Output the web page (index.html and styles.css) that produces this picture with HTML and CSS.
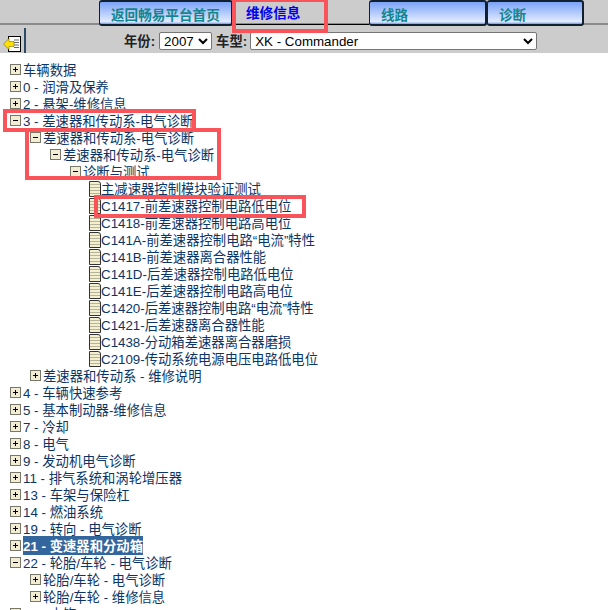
FILE: index.html
```html
<!DOCTYPE html>
<html lang="zh">
<head>
    <meta charset="UTF-8">
    <title>维修信息</title>
    <link rel="stylesheet" href="styles.css">
</head>
<body>
    <!-- Top tabs -->
    <div class="tabs">
        <a class="tab tab-home">返回畅易平台首页</a>
        <a class="tab-active">维修信息</a>
        <a class="tab tab-wiring">线路</a>
        <a class="tab tab-diag">诊断</a>
    </div>

    <!-- Year / model -->
    <div class="toolbar">
        <div class="toggle-box">
            <svg width="18" height="16" viewBox="0 0 18 16">
                <rect x="5.5" y="0.5" width="12" height="15" fill="#fff" stroke="#000"/>
                <path d="M11 4h5M11 6.5h5M11 9h5M11 11.5h5" stroke="#666" fill="none"/>
                <path d="M0.5 8L6 2.5V5.5h5v5H6v3z" fill="#ffe000" stroke="#77700a" stroke-width="0.6"/>
            </svg>
        </div>
        <div class="filters">
            <label>年份:</label>
            <select class="year"><option>2007</option></select>
            <label>车型:</label>
            <select class="model"><option>XK - Commander</option></select>
        </div>
    </div>

    <!-- Tree -->
    <div class="tree">
        <div class="node"><i class="box plus"></i>车辆数据</div>
        <div class="node"><i class="box plus"></i>0 - 润滑及保养</div>
        <div class="node"><i class="box plus"></i>2 - 悬架-维修信息</div>
        <div class="node"><i class="box minus"></i>3 - 差速器和传动系-电气诊断</div>
        <div class="sub">
            <div class="node"><i class="box minus"></i>差速器和传动系-电气诊断</div>
            <div class="sub">
                <div class="node"><i class="box minus"></i>差速器和传动系-电气诊断</div>
                <div class="sub">
                    <div class="node"><i class="box minus"></i>诊断与测试</div>
                    <div class="leaves">
                        <div class="leaf"><i class="doc"></i>主减速器控制模块验证测试</div>
                        <div class="leaf"><i class="doc"></i>C1417-前差速器控制电路低电位</div>
                        <div class="leaf"><i class="doc"></i>C1418-前差速器控制电路高电位</div>
                        <div class="leaf"><i class="doc"></i>C141A-前差速器控制电路“电流”特性</div>
                        <div class="leaf"><i class="doc"></i>C141B-前差速器离合器性能</div>
                        <div class="leaf"><i class="doc"></i>C141D-后差速器控制电路低电位</div>
                        <div class="leaf"><i class="doc"></i>C141E-后差速器控制电路高电位</div>
                        <div class="leaf"><i class="doc"></i>C1420-后差速器控制电路“电流”特性</div>
                        <div class="leaf"><i class="doc"></i>C1421-后差速器离合器性能</div>
                        <div class="leaf"><i class="doc"></i>C1438-分动箱差速器离合器磨损</div>
                        <div class="leaf"><i class="doc"></i>C2109-传动系统电源电压电路低电位</div>
                    </div>
                </div>
            </div>
            <div class="node"><i class="box plus"></i>差速器和传动系 - 维修说明</div>
        </div>
        <div class="node"><i class="box plus"></i>4 - 车辆快速参考</div>
        <div class="node"><i class="box plus"></i>5 - 基本制动器-维修信息</div>
        <div class="node"><i class="box plus"></i>7 - 冷却</div>
        <div class="node"><i class="box plus"></i>8 - 电气</div>
        <div class="node"><i class="box plus"></i>9 - 发动机电气诊断</div>
        <div class="node"><i class="box plus"></i>11 - 排气系统和涡轮增压器</div>
        <div class="node"><i class="box plus"></i>13 - 车架与保险杠</div>
        <div class="node"><i class="box plus"></i>14 - 燃油系统</div>
        <div class="node"><i class="box plus"></i>19 - 转向 - 电气诊断</div>
        <div class="node"><i class="box plus"></i><span class="selected">21 - 变速器和分动箱</span></div>
        <div class="node"><i class="box minus"></i>22 - 轮胎/车轮 - 电气诊断</div>
        <div class="sub">
            <div class="node"><i class="box plus"></i>轮胎/车轮 - 电气诊断</div>
            <div class="node"><i class="box plus"></i>轮胎/车轮 - 维修信息</div>
        </div>
        <div class="node"><i class="box plus"></i>23 - 内饰</div>
    </div>

    <!-- Red annotation boxes drawn over the screenshot -->
    <div class="mark mark-tab"></div>
    <div class="mark mark-row"></div>
    <div class="mark mark-group"></div>
    <div class="mark mark-leaf"></div>
</body>
</html>
```

FILE: styles.css
```css
html, body {
    height: 100%;
    overflow: hidden;
}
body {
    margin: 0;
    font-family: "Liberation Sans", "Noto Sans CJK SC", sans-serif;
    font-size: 13.33px;
    color: #0b3566;
    background: #fff;
    position: relative;
}
.tabs {
    display: flex;
    height: 25px;
    box-sizing: border-box;
    padding-left: 99px;
    padding-right: 24px;
    background: #cccccc;
    border-bottom: 2px solid #8a8a8a;
    font-size: 13.6px;
    font-weight: bold;
}
.tab {
    box-sizing: border-box;
    height: 26px;
    padding: 2px 0 0 11px;
    color: #14858f;
    background: linear-gradient(#7ba3f7, #e2ebff 90%, #6c96f5);
    border: 2px solid #10202f;
    border-left-width: 1px;
    border-radius: 3px;
}
.tab-home {
    width: 134px;
}
.tab-active {
    width: 136px;
    height: 25px;
    box-sizing: border-box;
    padding: 2px 0 0 13px;
    color: #0000f0;
    border-bottom: 1px solid #000;
}
.tab-wiring {
    width: 118px;
}
.tab-diag {
    width: 97px;
}
.toolbar {
    display: flex;
    height: 28px;
    background: #cccccc;
}
.toggle-box {
    width: 26px;
    height: 25px;
    margin-top: 3px;
    box-sizing: border-box;
    padding: 8px 0 0 3px;
    border-right: 2px solid #2c4a66;
}
.filters {
    display: flex;
    align-items: center;
    gap: 3px;
    margin-left: 98px;
    padding-top: 4px;
    height: 23px;
    font-weight: bold;
    color: #222;
}
.filters select {
    height: 18px;
    box-sizing: border-box;
    padding: 0;
    font-family: "Liberation Sans", sans-serif;
    font-size: 13.33px;
    background: #fff;
    border: 1px solid #767676;
    border-radius: 2px;
}
.filters .year {
    width: 53px;
    margin: 0 1px;
}
.filters .model {
    width: 287px;
}
.tree {
    padding: 8px 0 0 10px;
}
.sub {
    margin-left: 20px;
}
.leaves {
    margin-left: 18px;
}
.node, .leaf {
    display: flex;
    align-items: center;
    height: 17px;
    white-space: nowrap;
}
.box {
    position: relative;
    flex: none;
    width: 9px;
    height: 9px;
    margin-right: 2px;
    background: #f1ecd2;
    border: 1px solid #77776a;
}
.box::before {
    content: "";
    position: absolute;
    left: 2px;
    top: 4px;
    width: 5px;
    height: 1px;
    background: #000;
}
.plus::after {
    content: "";
    position: absolute;
    left: 4px;
    top: 2px;
    width: 1px;
    height: 5px;
    background: #000;
}
.doc {
    flex: none;
    width: 10px;
    height: 14px;
    margin-left: 1px;
    background: repeating-linear-gradient(#f4efcf 0 2px, #b5b39a 2px 3px);
    border: 1px solid #333;
    border-top-right-radius: 3px;
}
.selected {
    color: #fff;
    font-weight: bold;
    background: #33669c;
}
.mark {
    position: absolute;
    box-sizing: border-box;
    border: 4px solid #f9545a;
}
.mark-tab {
    left: 232px;
    top: -2px;
    width: 96px;
    height: 35px;
}
.mark-row {
    left: 3px;
    top: 109px;
    width: 193px;
    height: 23px;
}
.mark-group {
    left: 25px;
    top: 128px;
    width: 196px;
    height: 52px;
}
.mark-leaf {
    left: 94px;
    top: 195px;
    width: 212px;
    height: 23px;
}
```
